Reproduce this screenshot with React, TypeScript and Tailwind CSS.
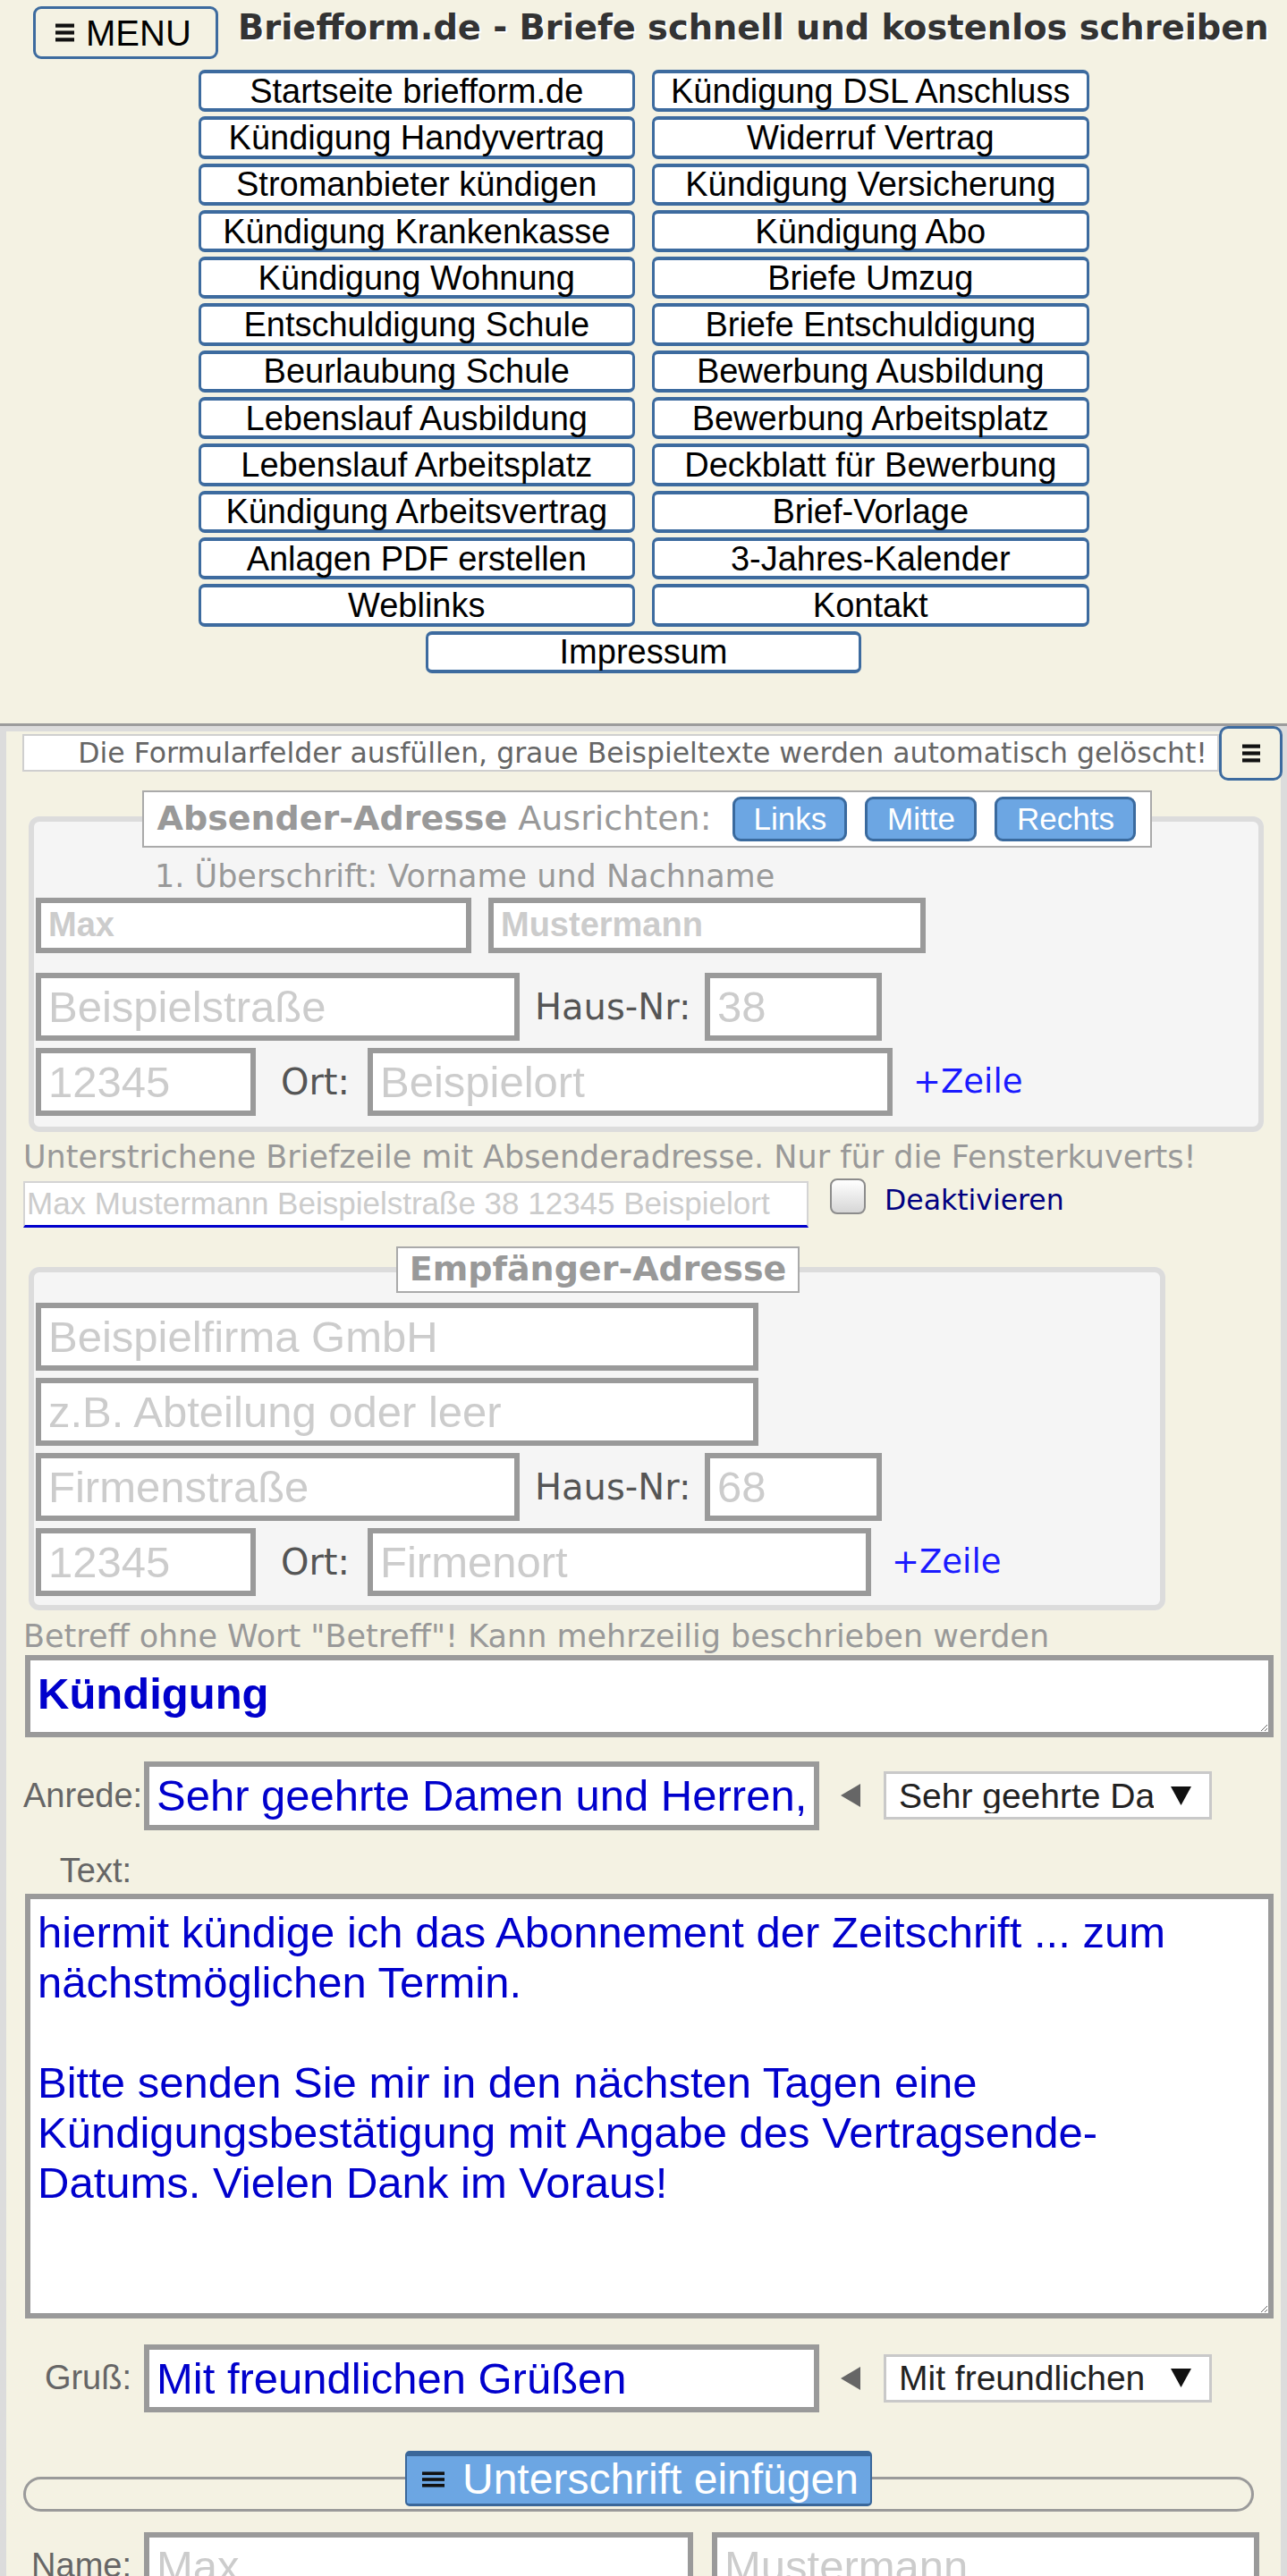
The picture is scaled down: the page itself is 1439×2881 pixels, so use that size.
import React from 'react'

const sans = "font-['Liberation_Sans',Arial,sans-serif]"
const deja = "font-['DejaVu_Sans',Verdana,sans-serif]"

const NAV: [string, string][] = [
  ['Startseite briefform.de', 'Kündigung DSL Anschluss'],
  ['Kündigung Handyvertrag', 'Widerruf Vertrag'],
  ['Stromanbieter kündigen', 'Kündigung Versicherung'],
  ['Kündigung Krankenkasse', 'Kündigung Abo'],
  ['Kündigung Wohnung', 'Briefe Umzug'],
  ['Entschuldigung Schule', 'Briefe Entschuldigung'],
  ['Beurlaubung Schule', 'Bewerbung Ausbildung'],
  ['Lebenslauf Ausbildung', 'Bewerbung Arbeitsplatz'],
  ['Lebenslauf Arbeitsplatz', 'Deckblatt für Bewerbung'],
  ['Kündigung Arbeitsvertrag', 'Brief-Vorlage'],
  ['Anlagen PDF erstellen', '3-Jahres-Kalender'],
  ['Weblinks', 'Kontakt'],
]

const LETTER =
  'hiermit kündige ich das Abonnement der Zeitschrift ... zum\nnächstmöglichen Termin.\n\nBitte senden Sie mir in den nächsten Tagen eine\nKündigungsbestätigung mit Angabe des Vertragsende-\nDatums. Vielen Dank im Voraus!'

function Bars({ className }: { className: string }) {
  return (
    <svg viewBox="0 0 20 20" className={className} preserveAspectRatio="none">
      <rect x="0" y="0.5" width="20" height="4" fill="#111" />
      <rect x="0" y="8" width="20" height="4" fill="#111" />
      <rect x="0" y="15.5" width="20" height="4" fill="#111" />
    </svg>
  )
}

function NavButton({ label, className = '' }: { label: string; className?: string }) {
  return (
    <a className={`flex items-center justify-center rounded-[7px] border-[3px] border-y-[4px] border-[#3d6b9f] bg-white text-[38px] leading-none text-black ${className}`}>
      {label}
    </a>
  )
}

function Box({ className = '', placeholder, value }: { className?: string; placeholder?: string; value?: string }) {
  return (
    <input
      readOnly
      placeholder={placeholder}
      defaultValue={value}
      className={`block shrink-0 border-[6px] border-[#9a9a9a] bg-white pl-[8px] pr-[3px] text-[#0000cc] outline-none placeholder:text-[#cccccc] ${className}`}
    />
  )
}

function BlueButton({ label, className = '' }: { label: string; className?: string }) {
  return (
    <button className={`flex h-[50px] items-center justify-center rounded-[9px] border-[3px] border-[#3a6a9e] bg-[#6ca6e3] text-[35px] leading-none text-white ${sans} ${className}`}>
      {label}
    </button>
  )
}

function Select({ text }: { text: string }) {
  return (
    <>
      <svg viewBox="0 0 22 26" className="ml-[24px] h-[26px] w-[22px] shrink-0">
        <path d="M0 13 L22 0 L22 26 Z" fill="#666" />
      </svg>
      <div className="ml-[26px] flex h-[54px] w-[367px] shrink-0 items-center border-[3px] border-[#c9c9c9] bg-white pl-[14px] pr-[20px] text-[39px] leading-none text-[#222]">
        <span className="w-[285px] overflow-hidden whitespace-nowrap">{text}</span>
        <svg viewBox="0 0 23 21" className="ml-auto h-[21px] w-[23px]">
          <path d="M0 0 L23 0 L11.5 21 Z" fill="#111" />
        </svg>
      </div>
    </>
  )
}

function AddressRows({ street, no, city, nameRow }: { street: string; no: string; city: string; nameRow?: React.ReactNode }) {
  return (
    <>
      {nameRow}
      <div className="flex items-center">
        <Box className="h-[76px] w-[541px] text-[49px]" placeholder={street} />
        <span className={`ml-[17px] w-[190px] shrink-0 text-[40px] text-[#555] ${deja}`}>Haus-Nr:</span>
        <Box className="h-[76px] w-[198px] text-[49px]" placeholder={no} />
      </div>
      <div className="mt-[8px] flex items-center">
        <Box className="h-[76px] w-[246px] text-[49px]" placeholder="12345" />
        <span className={`w-[125px] shrink-0 pr-[20px] text-right text-[40px] text-[#555] ${deja}`}>Ort:</span>
        <Box className={`h-[76px] text-[49px] ${city === 'Beispielort' ? 'w-[587px]' : 'w-[563px]'}`} placeholder={city} />
        <span className={`ml-[23px] text-[37px] text-[#1a1aff] ${deja}`}>+Zeile</span>
      </div>
    </>
  )
}

export default function App() {
  return (
    <div className={`min-h-[2881px] overflow-hidden bg-[#f4f2e3] ${sans}`}>
      {/* Kopf mit Menü */}
      <header className="pb-[56px] pt-[7px]">
        <div className="flex items-start">
          <button className="ml-[37px] flex h-[59px] w-[207px] shrink-0 items-center rounded-[9px] border-[3px] border-[#3d6b9f] pl-[22px] text-[40px] leading-none text-black">
            <Bars className="h-[21px] w-[21px]" />
            <span className="ml-[13px]">MENU</span>
          </button>
          <h1 className={`ml-[22px] mt-[2px] whitespace-nowrap text-[38.4px] font-bold leading-[44px] text-[#333] [text-shadow:2px_2px_1px_#fff] ${deja}`}>
            Briefform.de - Briefe schnell und kostenlos schreiben
          </h1>
        </div>
        <nav className="mx-auto mt-[12px] grid w-[996px] grid-cols-2 gap-x-[19px] gap-y-[5px] [grid-auto-rows:47.3px]">
          {NAV.map(([a, b]) => (
            <React.Fragment key={a}>
              <NavButton label={a} />
              <NavButton label={b} />
            </React.Fragment>
          ))}
          <NavButton label="Impressum" className="col-span-2 mx-auto w-[487px]" />
        </nav>
      </header>

      {/* Formular */}
      <div className="h-[3px] bg-[#9c9c9c]" />
      <section className="border-x-[7px] border-[#dcdcdc] bg-[linear-gradient(#dcdcdc_6px,#f4f2e3_6px)] pb-[60px]">
        <div className="flex items-center">
          <div className={`ml-[18px] flex h-[42px] flex-1 items-center justify-end whitespace-nowrap border-2 border-[#cfcfcf] bg-white pr-[11px] text-[31.5px] text-[#666] ${deja}`}>
            Die Formularfelder ausfüllen, graue Beispieltexte werden automatisch gelöscht!
          </div>
          <button className="-mr-[2px] flex h-[61px] w-[71px] items-center justify-center rounded-[10px] border-[3px] border-[#3d6b9f] bg-[#f4f2e3]">
            <Bars className="h-[21px] w-[20px]" />
          </button>
        </div>

        <div className="pl-[19px]">
          <fieldset className="ml-[6px] mt-[11px] w-[1381px] rounded-[12px] border-[6px] border-[#dcdcdc] bg-[#f5f5f5] pb-[12px] pl-[2px]">
            <legend className={`mx-auto flex h-[64px] items-center border-2 border-[#aaa] bg-white pl-[15px] pr-[16px] text-[38px] text-[#999] ${deja}`}>
              <b>Absender-Adresse</b>&nbsp;Ausrichten:
              <BlueButton label="Links" className="ml-[24px] w-[128px]" />
              <BlueButton label="Mitte" className="ml-[20px] w-[125px]" />
              <BlueButton label="Rechts" className="ml-[20px] w-[158px]" />
            </legend>
            <AddressRows
              street="Beispielstraße"
              no="38"
              city="Beispielort"
              nameRow={
                <>
                  <p className={`ml-[133px] mt-[12px] text-[35px] leading-[40px] text-[#999] ${deja}`}>1. Überschrift: Vorname und Nachname</p>
                  <div className="mb-[22px] mt-[4px] flex">
                    <Box className="h-[62px] w-[487px] text-[38px] font-bold" placeholder="Max" />
                    <Box className="ml-[19px] h-[62px] w-[489px] text-[38px] font-bold" placeholder="Mustermann" />
                  </div>
                </>
              }
            />
          </fieldset>

          <p className={`mt-[8px] text-[35px] leading-[40px] text-[#999] ${deja}`}>
            Unterstrichene Briefzeile mit Absenderadresse. Nur für die Fensterkuverts!
          </p>
          <div className="mt-[4px] flex items-start">
            <input
              readOnly
              placeholder="Max Mustermann Beispielstraße 38 12345 Beispielort"
              className="mt-[3px] h-[52px] w-[878px] border-x-2 border-b-[3px] border-t-2 border-x-[#d4d4d4] border-b-[#0000cc] border-t-[#d4d4d4] bg-white px-[2px] text-[35px] outline-none placeholder:text-[#cccccc]"
            />
            <span className="ml-[24px] h-[40px] w-[40px] shrink-0 rounded-[8px] border-2 border-[#8c8c8c] bg-[linear-gradient(#ffffff,#d6d6d6)]" />
            <span className={`ml-[21px] mt-[6px] text-[31.5px] leading-[36px] text-[#000080] ${deja}`}>Deaktivieren</span>
          </div>

          <fieldset className="ml-[6px] mt-[21px] w-[1271px] rounded-[12px] border-[6px] border-[#dcdcdc] bg-[#f5f5f5] pb-[10px] pl-[2px]">
            <legend className={`mx-auto flex h-[52px] items-center border-2 border-[#aaa] bg-white px-[13px] text-[38px] font-bold text-[#999] ${deja}`}>
              Empfänger-Adresse
            </legend>
            <div className="mt-[11px]">
              <Box className="h-[76px] w-[808px] text-[49px]" placeholder="Beispielfirma GmbH" />
              <Box className="mb-[8px] mt-[8px] h-[76px] w-[808px] text-[49px]" placeholder="z.B. Abteilung oder leer" />
              <AddressRows street="Firmenstraße" no="68" city="Firmenort" />
            </div>
          </fieldset>

          <p className={`mt-[9px] text-[35px] leading-[40px] text-[#999] ${deja}`}>
            Betreff ohne Wort &quot;Betreff&quot;! Kann mehrzeilig beschrieben werden
          </p>
          <textarea
            readOnly
            defaultValue="Kündigung"
            className="ml-[2px] mt-[1px] block h-[92px] w-[1396px] border-[6px] border-[#9a9a9a] bg-white px-[8px] pt-[9px] text-[49px] font-bold leading-[56px] text-[#0000cc] outline-none"
          />

          <div className="mt-[27px] flex items-center">
            <span className="w-[121px] shrink-0 whitespace-nowrap text-right text-[38px] text-[#666]">Anrede:</span>
            <Box className="ml-[14px] h-[77px] w-[755px] text-[49px]" value="Sehr geehrte Damen und Herren," />
            <Select text="Sehr geehrte Damen und Herren," />
          </div>

          <p className="mt-[23px] w-[121px] text-right text-[38px] leading-[44px] text-[#666]">Text:</p>
          <textarea
            readOnly
            defaultValue={LETTER}
            className="ml-[2px] mt-[4px] block h-[475px] w-[1396px] border-[6px] border-[#9a9a9a] bg-white pl-[8px] pr-[20px] pt-[9px] text-[49px] leading-[56px] text-[#0000cc] outline-none"
          />

          <div className="mt-[29px] flex items-center">
            <span className="w-[121px] shrink-0 whitespace-nowrap text-right text-[38px] text-[#666]">Gruß:</span>
            <Box className="ml-[14px] h-[76px] w-[755px] text-[49px]" value="Mit freundlichen Grüßen" />
            <Select text="Mit freundlichen Grüßen" />
          </div>

          <fieldset className="mt-[43px] w-[1376px] rounded-full border-[3px] border-[#9a9a9a] pb-[3px]">
            <legend className="mx-auto">
              <button className="flex h-[62px] w-[522px] items-center rounded-[5px] border-x-2 border-b-[3px] border-t-[6px] border-[#3a679a] bg-[#6ca6e3] pl-[17px] text-[48px] leading-none text-white">
                <Bars className="h-[18px] w-[25px]" />
                <span className="ml-[20px]">Unterschrift einfügen</span>
              </button>
            </legend>
          </fieldset>

          <div className="mt-[23px] flex items-center">
            <span className="w-[121px] shrink-0 text-right text-[38px] text-[#666]">Name:</span>
            <Box className="ml-[14px] h-[76px] w-[614px] text-[49px]" placeholder="Max" />
            <Box className="ml-[21px] h-[76px] w-[612px] text-[49px]" placeholder="Mustermann" />
          </div>
        </div>
      </section>
    </div>
  )
}
